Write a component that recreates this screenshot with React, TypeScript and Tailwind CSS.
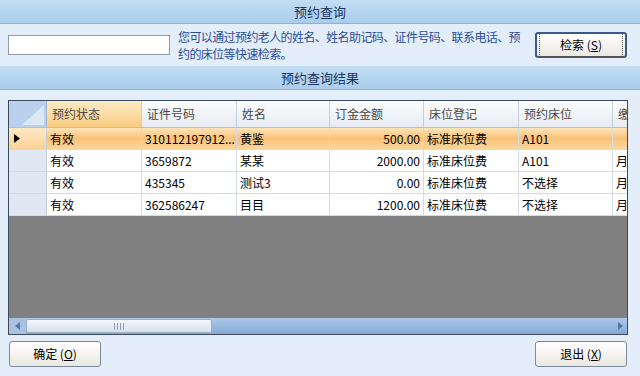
import React from 'react'

const cols = [
    { title: '预约状态', w: 'w-[95px]' },
    { title: '证件号码', w: 'w-[95px]' },
    { title: '姓名', w: 'w-[93px]' },
    { title: '订金金额', w: 'w-[94px]', right: true },
    { title: '床位登记', w: 'w-[95px]' },
    { title: '预约床位', w: 'w-[94px]' },
    { title: '缴', w: 'w-[60px]' },
]

const rows = [
    ['有效', '310112197912...', '黄鉴', '500.00', '标准床位费', 'A101', ''],
    ['有效', '3659872', '某某', '2000.00', '标准床位费', 'A101', '月'],
    ['有效', '435345', '测试3', '0.00', '标准床位费', '不选择', '月'],
    ['有效', '362586247', '目目', '1200.00', '标准床位费', '不选择', '月'],
]

function TitleBar({ text }: { text: string }) {
    return (
        <div className="h-[24px] shrink-0 flex items-center justify-center bg-gradient-to-b from-[#c2ddf3] to-[#a9cdec] border-b border-[#8fb1d4] text-[13px] text-[#1b365e]">
            {text}
        </div>
    )
}

function WinButton({ label, hot, focus }: { label: string; hot: string; focus?: boolean }) {
    return (
        <button
            className={`w-[92px] h-[26px] rounded-[3px] bg-gradient-to-b from-[#ffffff] to-[#ebe8e1] text-[12px] text-black flex items-center justify-center ${
                focus ? 'border-2 border-[#3a5a8c]' : 'border border-[#7a8a9c]'
            }`}
        >
            <span className={focus ? 'px-5 py-[2px] border border-dotted border-[#555]' : ''}>
                {label} (<span className="underline">{hot}</span>)
            </span>
        </button>
    )
}

export default function App() {
    return (
        <div
            className="w-[640px] h-[376px] bg-[#e4eefb] flex flex-col overflow-hidden"
            style={{ fontFamily: '"Noto Sans CJK SC", "Liberation Sans", sans-serif' }}
        >
            <TitleBar text="预约查询" />

            <div className="h-[42px] shrink-0 flex items-center pl-[8px]">
                <input className="w-[162px] h-[20px] shrink-0 bg-white border border-[#8d9cad] outline-none" />
                <p className="ml-[8px] w-[352px] shrink-0 text-[12px] tracking-[-0.6px] leading-[17px] text-[#2a4d9a] whitespace-nowrap overflow-hidden">
                    您可以通过预约老人的姓名、姓名助记码、证件号码、联系电话、预
                    <br />
                    约的床位等快速检索。
                </p>
                <div className="ml-auto mr-[13px]">
                    <WinButton label="检索" hot="S" focus />
                </div>
            </div>

            <TitleBar text="预约查询结果" />

            {/* grid */}
            <div className="mt-[10px] mx-[8px] w-[620px] h-[235px] shrink-0 border border-[#3c4a5c] bg-[#808080] flex flex-col overflow-hidden">
                <div className="flex h-[27px] shrink-0 border-b border-[#b4c1d1]">
                    <div className="w-[38px] shrink-0 bg-[#b9d1ec] border-r border-[#9fb4cf] flex items-end justify-end p-[2px]">
                        <svg width="22" height="20" viewBox="0 0 22 20">
                            <polygon points="22,0 22,20 0,20" fill="#dde8f5" />
                        </svg>
                    </div>
                    {cols.map((c, i) => (
                        <div
                            key={c.title}
                            className={`${c.w} shrink-0 border-r border-[#c6d0dc] flex items-center px-[5px] text-[12px] text-[#4a4a4a] whitespace-nowrap overflow-hidden ${
                                i === 0
                                    ? 'bg-gradient-to-b from-[#fdebc6] to-[#f8cb80]'
                                    : 'bg-gradient-to-b from-[#fbfcfd] to-[#e7ecf2]'
                            }`}
                        >
                            {c.title}
                        </div>
                    ))}
                </div>

                {rows.map((r, ri) => {
                    const sel = ri === 0
                    return (
                        <div
                            key={ri}
                            className={`flex h-[22px] shrink-0 border-b border-[#d3dbe6] ${
                                sel ? 'bg-gradient-to-b from-[#fee5b8] via-[#f9c277] to-[#fcd69c]' : 'bg-white'
                            }`}
                        >
                            <div
                                className={`w-[38px] shrink-0 border-r border-[#c3cfdf] flex items-center pl-[5px] ${
                                    sel ? 'bg-gradient-to-b from-[#fee9c6] to-[#fbd296]' : 'bg-[#dfe7f3]'
                                }`}
                            >
                                {sel && (
                                    <svg width="6" height="9" viewBox="0 0 6 9">
                                        <polygon points="0,0 6,4.5 0,9" fill="#000" />
                                    </svg>
                                )}
                            </div>
                            {r.map((v, ci) => (
                                <div
                                    key={ci}
                                    className={`${cols[ci].w} shrink-0 border-r border-[#d3dbe6] flex items-center px-[3px] text-[12px] text-black whitespace-nowrap overflow-hidden ${
                                        cols[ci].right ? 'justify-end' : ''
                                    }`}
                                >
                                    {v}
                                </div>
                            ))}
                        </div>
                    )
                })}

                <div className="flex-1" />

                {/* horizontal scrollbar */}
                <div className="h-[16px] shrink-0 flex bg-gradient-to-b from-[#adc9ea] to-[#85a9d6]">
                    <div className="w-[17px] shrink-0 bg-[#a9c2e1] flex items-center justify-center">
                        <svg width="5" height="8" viewBox="0 0 5 8">
                            <polygon points="5,0 0,4 5,8" fill="#5a7ba6" />
                        </svg>
                    </div>
                    <div className="w-[186px] shrink-0 my-[1px] rounded-[2px] border border-[#9bb0c8] bg-gradient-to-b from-[#f4f7fa] to-[#d8e0ea] flex items-center justify-center gap-[2px]">
                        <span className="w-px h-[7px] bg-[#8a9bb0]" />
                        <span className="w-px h-[7px] bg-[#8a9bb0]" />
                        <span className="w-px h-[7px] bg-[#8a9bb0]" />
                        <span className="w-px h-[7px] bg-[#8a9bb0]" />
                    </div>
                    <div className="flex-1" />
                    <div className="w-[14px] shrink-0 flex items-center justify-center">
                        <svg width="5" height="8" viewBox="0 0 5 8">
                            <polygon points="0,0 5,4 0,8" fill="#5577a0" />
                        </svg>
                    </div>
                </div>
            </div>

            <div className="mt-[6px] flex justify-between pl-[9px] pr-[13px]">
                <WinButton label="确定" hot="O" />
                <WinButton label="退出" hot="X" />
            </div>
        </div>
    )
}
